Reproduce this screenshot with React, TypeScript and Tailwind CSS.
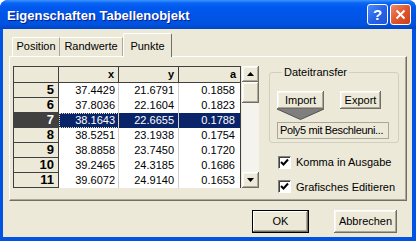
import React from "react";

const rows = [
  { n: "5", x: "37.4429", y: "21.6791", a: "0.1858", sel: false },
  { n: "6", x: "37.8036", y: "22.1604", a: "0.1823", sel: false },
  { n: "7", x: "38.1643", y: "22.6655", a: "0.1788", sel: true },
  { n: "8", x: "38.5251", y: "23.1938", a: "0.1754", sel: false },
  { n: "9", x: "38.8858", y: "23.7450", a: "0.1720", sel: false },
  { n: "10", x: "39.2465", y: "24.3185", a: "0.1686", sel: false },
  { n: "11", x: "39.6072", y: "24.9140", a: "0.1653", sel: false },
];

const raised =
  "bg-[#ECE9D8] shadow-[inset_-1px_-1px_0_#716F64,inset_1px_1px_0_#FFFFFF,inset_-2px_-2px_0_#ACA899,inset_2px_2px_0_#F7F6F1]";

function Arrow({ down }: { down?: boolean }) {
  return (
    <svg width="7" height="4" viewBox="0 0 7 4">
      {down ? (
        <polygon points="0,0 7,0 3.5,4" fill="#000" />
      ) : (
        <polygon points="3.5,0 7,4 0,4" fill="#000" />
      )}
    </svg>
  );
}

function Check() {
  return (
    <div className="w-[13px] h-[13px] bg-white border-t border-l border-[#808080] border-r border-b border-r-white border-b-white shadow-[inset_1px_1px_0_#404040] flex items-center justify-center">
      <svg width="9" height="9" viewBox="0 0 9 9">
        <path d="M1 4 L3.5 6.5 L8 1.5" stroke="#000" strokeWidth="2" fill="none" />
      </svg>
    </div>
  );
}

export default function App() {
  return (
    <div className="w-[416px] h-[241px] flex flex-col bg-[#0054E3] rounded-t-[8px] overflow-hidden font-['Liberation_Sans',Arial,sans-serif] text-[11px] text-black">
      {/* Title bar */}
      <div className="h-[29px] shrink-0 flex items-center pl-[7px] pr-[5px] bg-[linear-gradient(to_bottom,#3D95FF_0%,#0A66F5_10%,#0058EE_25%,#0055E8_55%,#0052DE_85%,#0045C6_100%)]">
        <div className="flex-1 text-white font-bold text-[13px] leading-none [text-shadow:1px_1px_0_#0A1E8C] pt-[1px]">
          Eigenschaften Tabellenobjekt
        </div>
        <div className="flex gap-[2px]">
          <div className="w-[21px] h-[21px] rounded-[3px] border border-white bg-[linear-gradient(135deg,#4F8CF9_0%,#2663E8_50%,#1F55D8_100%)] flex items-center justify-center text-white font-bold text-[15px] leading-none">
            ?
          </div>
          <div className="w-[21px] h-[21px] rounded-[3px] border border-white bg-[linear-gradient(135deg,#F08A6A_0%,#E0562D_50%,#C8401A_100%)] flex items-center justify-center">
            <svg width="11" height="11" viewBox="0 0 11 11">
              <path d="M1.5 1.5 L9.5 9.5 M9.5 1.5 L1.5 9.5" stroke="#fff" strokeWidth="2" />
            </svg>
          </div>
        </div>
      </div>

      {/* Body */}
      <div className="flex-1 ml-[3px] mr-[4px] mb-[4px] bg-[#ECE9D8] flex flex-col pl-[6px] pr-[5px] pt-[4px]">
        {/* Tabs */}
        <div className="h-[23px] flex items-end pl-[3px] relative z-10">
          <div className="w-[48px] h-[19px] border-l border-t border-white border-r border-r-[#ACA899] rounded-tl-[2px] flex items-center justify-center pb-[1px]">
            Position
          </div>
          <div className="w-[63px] h-[19px] border-t border-white border-r border-r-[#ACA899] flex items-center justify-center pb-[1px]">
            Randwerte
          </div>
          <div className="w-[49px] h-[24px] mb-[-1px] bg-[#ECE9D8] border-l border-t border-white border-r border-r-[#716F64] rounded-t-[2px] flex justify-center pt-[4px]">
            Punkte
          </div>
        </div>

        {/* Panel */}
        <div className="h-[145px] border-l border-t border-white border-r border-b border-r-[#716F64] border-b-[#716F64] shadow-[inset_-1px_-1px_0_#ACA899] flex pl-[3px] pt-[9px]">
          {/* Grid */}
          <div className="w-[228px] h-[122px] flex flex-col border-l border-t border-[#404040] self-start">
            <div className="flex h-[16px]">
              <div className="w-[45px] bg-[#ECE9D8] border-r border-b border-[#404040]" />
              <div className="w-[60px] bg-[#ECE9D8] border-r border-b border-[#404040] font-bold text-right pr-[4px] leading-[15px]">x</div>
              <div className="w-[60px] bg-[#ECE9D8] border-r border-b border-[#404040] font-bold text-right pr-[4px] leading-[15px]">y</div>
              <div className="w-[62px] bg-[#ECE9D8] border-r border-b border-[#404040] font-bold text-right pr-[4px] leading-[15px]">a</div>
            </div>
            {rows.map((r) => (
              <div key={r.n} className="flex h-[15px]">
                <div
                  className={
                    r.sel
                      ? "w-[45px] bg-[#404040] text-white border-r border-b border-[#404040] font-bold text-[13px] text-right pr-[4px] leading-[14px]"
                      : "w-[45px] bg-[#ECE9D8] border-r border-b border-[#404040] font-bold text-[13px] text-right pr-[4px] leading-[14px]"
                  }
                >
                  {r.n}
                </div>
                <div
                  className={
                    r.sel
                      ? "w-[60px] bg-[#0A246A] text-white border-r border-[#D4D0C8] text-right pr-[3px] leading-[15px] outline outline-1 outline-dotted outline-[#E0E0A0] outline-offset-[-1px]"
                      : "w-[60px] bg-white border-r border-[#D4D0C8] text-right pr-[3px] leading-[15px]"
                  }
                >
                  {r.x}
                </div>
                <div
                  className={
                    r.sel
                      ? "w-[60px] bg-[#0A246A] text-white border-r border-[#D4D0C8] text-right pr-[4px] leading-[15px]"
                      : "w-[60px] bg-white border-r border-[#D4D0C8] text-right pr-[4px] leading-[15px]"
                  }
                >
                  {r.y}
                </div>
                <div
                  className={
                    r.sel
                      ? "w-[62px] bg-[#0A246A] text-white border-r border-[#404040] text-right pr-[5px] leading-[15px]"
                      : "w-[62px] bg-white border-r border-[#404040] text-right pr-[5px] leading-[15px]"
                  }
                >
                  {r.a}
                </div>
              </div>
            ))}
          </div>

          {/* Scrollbar */}
          <div className="w-[17px] h-[122px] ml-[1px] flex flex-col self-start">
            <div className={"h-[16px] flex items-center justify-center " + raised}>
              <Arrow />
            </div>
            <div className="flex-1 bg-[#F4F3EE] flex flex-col">
              <div className={"h-[21px] " + raised} />
            </div>
            <div className={"h-[16px] flex items-center justify-center " + raised}>
              <Arrow down />
            </div>
          </div>

          {/* Right column */}
          <div className="ml-[10px] flex flex-col">
            <fieldset className="w-[130px] h-[77px] border border-[#D0D0BF] rounded-[3px] pl-[7px] pt-[13px]">
              <legend className="ml-[5px] px-[2px] leading-[12px]">Dateitransfer</legend>
              <div className="flex items-start">
                <div className="flex flex-col w-[47px]">
                  <div className={"h-[18px] flex items-center justify-center " + raised}>Import</div>
                  <svg width="47" height="11" viewBox="0 0 47 11" className="block">
                    <polygon points="0,0 47,0 23.5,10.5" fill="#7F7F7F" />
                    <polyline points="0,0 23.5,10.5 47,0" fill="none" stroke="#505050" strokeWidth="1" />
                  </svg>
                </div>
                <div className={"ml-[16px] w-[41px] h-[18px] flex items-center justify-center " + raised}>Export</div>
              </div>
              <div className="mt-[2px] w-[112px] h-[17px] border border-[#A8A89C] pl-[2px] leading-[15px] whitespace-nowrap tracking-[-0.35px]">
                Poly5 mit Beschleuni...
              </div>
            </fieldset>
            <div className="mt-[11px] ml-[9px] flex items-center gap-[5px]">
              <Check />
              <span>Komma in Ausgabe</span>
            </div>
            <div className="mt-[8px] ml-[9px] flex items-center gap-[5px]">
              <Check />
              <span>Grafisches Editieren</span>
            </div>
          </div>
        </div>

        {/* Buttons */}
        <div className="flex justify-end gap-[25px] mt-[9px] pr-[10px]">
          <div className="w-[57px] h-[23px] border border-black bg-[#ECE9D8] shadow-[inset_-1px_-1px_0_#716F64,inset_1px_1px_0_#FFFFFF,inset_-2px_-2px_0_#ACA899] flex items-center justify-center">
            OK
          </div>
          <div className={"w-[63px] h-[23px] flex items-center justify-center " + raised}>Abbrechen</div>
        </div>
      </div>
    </div>
  );
}
